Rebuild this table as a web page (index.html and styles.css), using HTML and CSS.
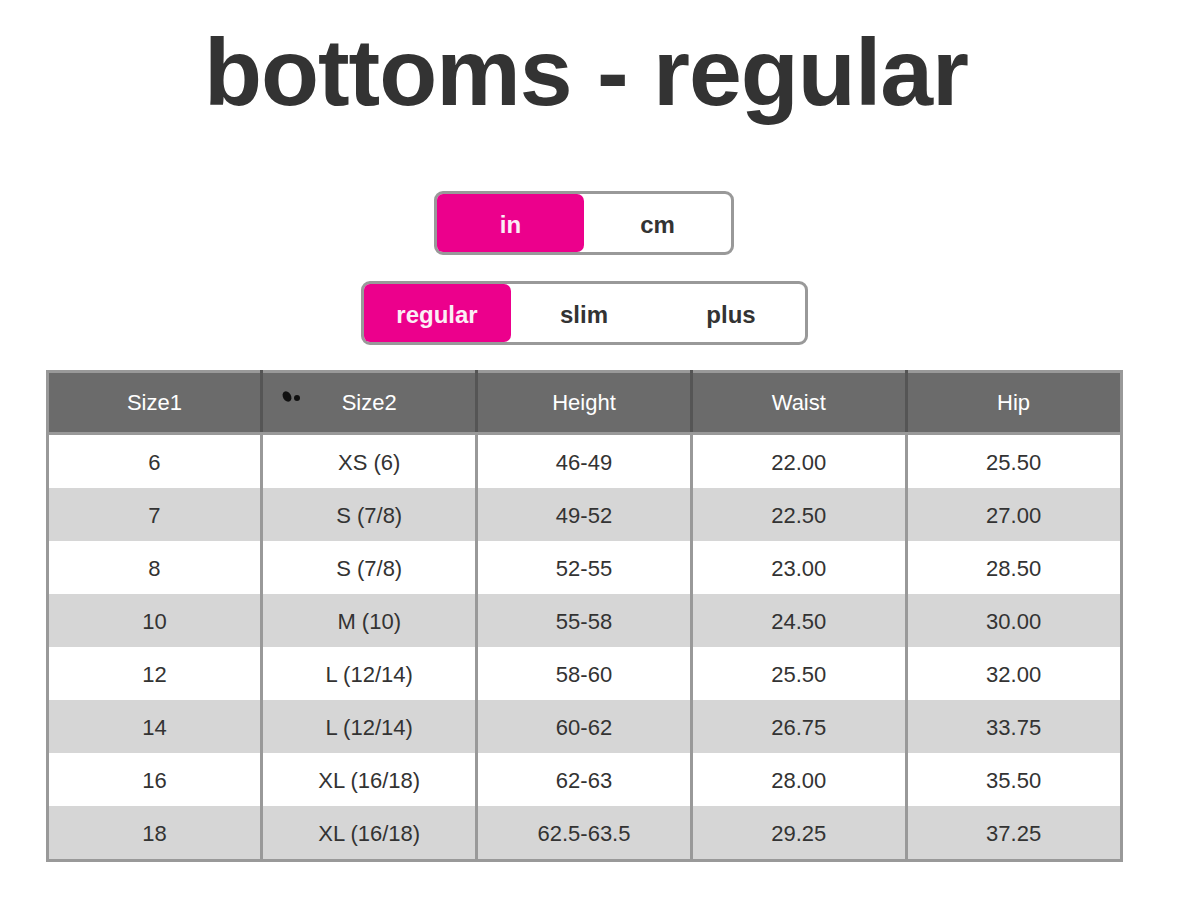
FILE: index.html
```html
<!DOCTYPE html>
<html>
<head>
<meta charset="utf-8">
<link rel="stylesheet" href="styles.css">
</head>
<body>
<div class="page">
  <h1 class="title">bottoms - regular</h1>
  <div class="toggle toggle-units">
    <div class="seg active">in</div>
    <div class="seg">cm</div>
  </div>
  <div class="toggle toggle-fit">
    <div class="seg active">regular</div>
    <div class="seg">slim</div>
    <div class="seg">plus</div>
  </div>
  <table class="chart">
    <thead>
      <tr>
        <th>Size1</th>
        <th class="dotted"><span class="dots"><i class="d1"></i><i class="d2"></i></span>Size2</th>
        <th>Height</th>
        <th>Waist</th>
        <th>Hip</th>
      </tr>
    </thead>
    <tbody>
      <tr><td>6</td><td>XS (6)</td><td>46-49</td><td>22.00</td><td>25.50</td></tr>
      <tr><td>7</td><td>S (7/8)</td><td>49-52</td><td>22.50</td><td>27.00</td></tr>
      <tr><td>8</td><td>S (7/8)</td><td>52-55</td><td>23.00</td><td>28.50</td></tr>
      <tr><td>10</td><td>M (10)</td><td>55-58</td><td>24.50</td><td>30.00</td></tr>
      <tr><td>12</td><td>L (12/14)</td><td>58-60</td><td>25.50</td><td>32.00</td></tr>
      <tr><td>14</td><td>L (12/14)</td><td>60-62</td><td>26.75</td><td>33.75</td></tr>
      <tr><td>16</td><td>XL (16/18)</td><td>62-63</td><td>28.00</td><td>35.50</td></tr>
      <tr><td>18</td><td>XL (16/18)</td><td>62.5-63.5</td><td>29.25</td><td>37.25</td></tr>
    </tbody>
  </table>
</div>
</body>
</html>
```
FILE: styles.css
```css
html, body {
  margin: 0;
  padding: 0;
  background: #fff;
}
body {
  font-family: "Liberation Sans", Arial, sans-serif;
  color: #333;
}
.page {
  width: 1168px;
  display: flex;
  flex-direction: column;
  align-items: center;
  padding-top: 24px;
}
.title {
  margin: 0;
  font-size: 95px;
  line-height: 96px;
  font-weight: bold;
  letter-spacing: -1px;
  color: #333;
  padding-left: 4px;
}
.toggle {
  display: flex;
  border: 3px solid #999;
  border-radius: 9px;
  overflow: hidden;
  background: #fff;
}
.toggle-units {
  margin-top: 71px;
}
.toggle-fit {
  margin-top: 26px;
}
.seg {
  width: 147px;
  height: 58px;
  padding-top: 3px;
  box-sizing: border-box;
  display: flex;
  align-items: center;
  justify-content: center;
  font-size: 24px;
  font-weight: bold;
  color: #333;
}
.seg.active {
  background: #ec008c;
  color: #fbeef5;
  border-radius: 0 7px 7px 0;
}
.chart {
  margin-top: 25px;
  width: 1077px;
  border-collapse: collapse;
  table-layout: fixed;
  border: 3px solid #999;
}
.chart th {
  background: #6b6b6b;
  color: #fff;
  font-weight: normal;
  font-size: 22px;
  height: 59px;
  border: 3px solid #555;
  border-top-color: #999;
  border-bottom: 3px solid #999;
  padding: 0;
  text-align: center;
  position: relative;
}
.chart th:first-child { border-left-color: #999; }
.chart th:last-child { border-right-color: #999; }
.chart td {
  height: 50px;
  border: 3px solid #999;
  border-top: none;
  border-bottom: none;
  text-align: center;
  font-size: 22px;
  color: #333;
  padding: 3px 0 0;
}
.chart tbody tr:nth-child(even) td {
  background: #d6d6d6;
}
.chart tbody tr:last-child td {
  border-bottom: 3px solid #999;
}
.dots {
  position: absolute;
  left: 18px;
  top: 16px;
  width: 24px;
  height: 14px;
}
.dots i {
  position: absolute;
  background: #111;
  border-radius: 50%;
}
.dots .d1 {
  left: 2px;
  top: 2px;
  width: 8px;
  height: 11px;
  transform: rotate(-30deg);
}
.dots .d2 {
  left: 13px;
  top: 6px;
  width: 6px;
  height: 6px;
}
```
